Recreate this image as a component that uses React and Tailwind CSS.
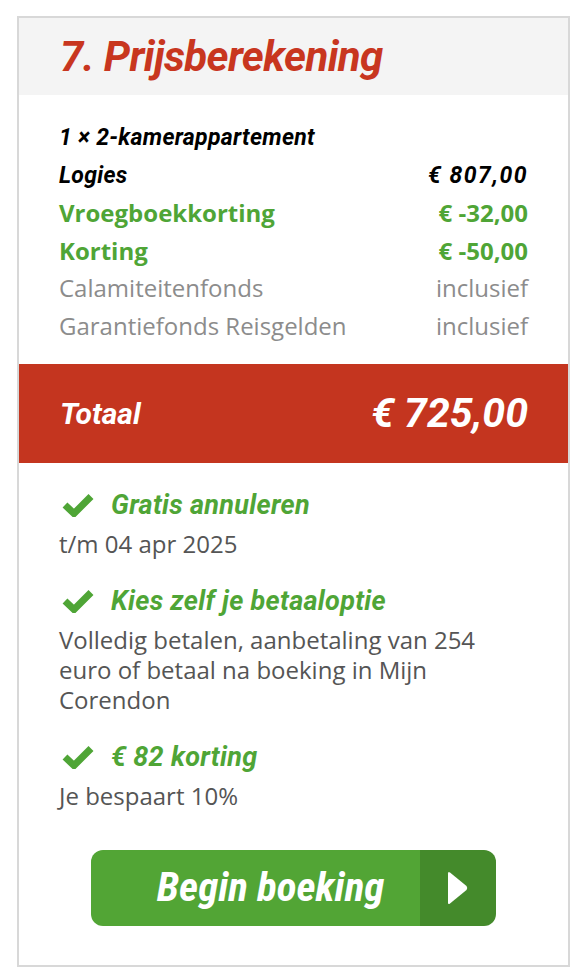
import React from "react";

const dinBase = "font-['Roboto',sans-serif] italic font-bold";
const open = "font-['Open_Sans',sans-serif]";

function Check() {
  return (
    <svg width="32" height="24" viewBox="0 0 32 24" className="shrink-0">
      <path d="M3 12 L12 20.5 L29 3.5" fill="none" stroke="#4fa536" strokeWidth="7" strokeLinejoin="miter" />
    </svg>
  );
}

function Benefit({ title, children }) {
  return (
    <div className="flex flex-col">
      <div className="flex items-center gap-[17px] pl-[3px] h-[36px]">
        <Check />
        <span className={`${dinBase} [font-stretch:92%] text-[27px] text-[#4fa536] tracking-[0.3px]`}>{title}</span>
      </div>
      <div className={`${open} text-[24px] leading-[30px] text-[#555555] mt-[6px]`}>{children}</div>
    </div>
  );
}

export default function App() {
  return (
    <div className="bg-white w-[584px] min-h-[978px] pt-[16px] pl-[17px]">
      <div className="w-[553px] border-2 border-[#d8d8d8] bg-white">
        <div className="bg-[#f4f4f4] h-[77px] flex items-center pl-[41px]">
          <h2 className={`${dinBase} [font-stretch:93%] text-[42px] text-[#c8361f] leading-none tracking-[-0.6px]`}>7. Prijsberekening</h2>
        </div>
        <div className="pt-[24px] pb-[20px] pl-[40px] pr-[40px]">
          <div className={`${dinBase} text-[23px] tracking-[0.3px] text-black leading-[37.5px]`}>1 × 2-kamerappartement</div>
          <div className={`flex justify-between ${dinBase} text-[23px] text-black leading-[37.5px]`}>
            <span className="tracking-[0.3px]">Logies</span>
            <span className="tracking-[1.5px]">€ 807,00</span>
          </div>
          <div className={`flex justify-between ${open} font-bold text-[24px] text-[#4fa536] leading-[37.5px]`}>
            <span>Vroegboekkorting</span>
            <span>€ -32,00</span>
          </div>
          <div className={`flex justify-between ${open} font-bold text-[24px] text-[#4fa536] leading-[37.5px]`}>
            <span>Korting</span>
            <span>€ -50,00</span>
          </div>
          <div className={`flex justify-between ${open} text-[24px] text-[#8c8c8c] leading-[37.5px]`}>
            <span>Calamiteitenfonds</span>
            <span>inclusief</span>
          </div>
          <div className={`flex justify-between ${open} text-[24px] text-[#8c8c8c] leading-[37.5px]`}>
            <span>Garantiefonds Reisgelden</span>
            <span>inclusief</span>
          </div>
        </div>
        <div className="bg-[#c4351f] h-[99px] flex items-center justify-between pl-[41px] pr-[40px]">
          <span className={`${dinBase} [font-stretch:88%] text-[30px] text-white`}>Totaal</span>
          <span className={`${dinBase} [font-stretch:90%] text-[41px] text-white`}>€ 725,00</span>
        </div>
        <div className="pt-[24px] pl-[40px] pr-[40px] pb-[39px] flex flex-col gap-[24px]">
          <Benefit title="Gratis annuleren">t/m 04 apr 2025</Benefit>
          <Benefit title="Kies zelf je betaaloptie">
            Volledig betalen, aanbetaling van 254 euro of betaal na boeking in Mijn Corendon
          </Benefit>
          <Benefit title="€ 82 korting">Je bespaart 10%</Benefit>
          <div className="flex justify-center mt-[15px]">
            <button className="flex h-[76px] w-[405px] rounded-[12px] overflow-hidden">
              <span className={`flex-1 bg-[#52a535] flex items-center justify-center pl-[30px] ${dinBase} [font-stretch:85%] text-[41px] text-white`}>
                Begin boeking
              </span>
              <span className="w-[76px] bg-[#448a2b] flex items-center justify-center">
                <svg width="22" height="36" viewBox="0 0 22 36">
                  <path d="M3 2.5 L19.5 16 Q21 18 19.5 20 L3 33.5 Q1 35 1 32.5 L1 3.5 Q1 1 3 2.5 Z" fill="white" />
                </svg>
              </span>
            </button>
          </div>
        </div>
      </div>
    </div>
  );
}
